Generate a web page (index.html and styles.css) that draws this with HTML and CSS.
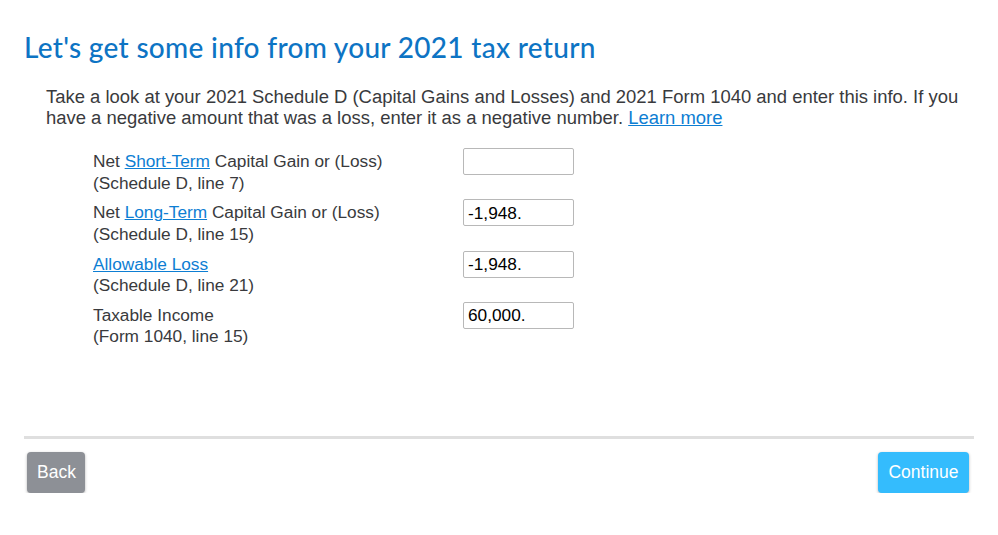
FILE: index.html
```html
<!DOCTYPE html>
<html>
<head>
<meta charset="utf-8">
<link rel="stylesheet" href="styles.css">
</head>
<body>
<div class="page">
  <h1 class="title">Let's get some info from your 2021 tax return</h1>
  <p class="intro">Take a look at your 2021 Schedule D (Capital Gains and Losses) and 2021 Form 1040 and enter this info. If you have a negative amount that was a loss, enter it as a negative number. <a href="#" class="link">Learn more</a></p>
  <div class="form">
    <div class="row">
      <div class="label">Net <a href="#" class="link">Short-Term</a> Capital Gain or (Loss)<br>(Schedule D, line 7)</div>
      <input class="field" type="text" value="">
    </div>
    <div class="row">
      <div class="label">Net <a href="#" class="link">Long-Term</a> Capital Gain or (Loss)<br>(Schedule D, line 15)</div>
      <input class="field" type="text" value="-1,948.">
    </div>
    <div class="row">
      <div class="label"><a href="#" class="link">Allowable Loss</a><br>(Schedule D, line 21)</div>
      <input class="field" type="text" value="-1,948.">
    </div>
    <div class="row">
      <div class="label">Taxable Income<br>(Form 1040, line 15)</div>
      <input class="field" type="text" value="60,000.">
    </div>
  </div>
  <div class="divider"></div>
  <div class="actions">
    <button class="btn btn-back">Back</button>
    <button class="btn btn-continue">Continue</button>
  </div>
</div>
</body>
</html>
```
FILE: styles.css
```css
html, body {
  margin: 0;
  padding: 0;
  background: #fff;
}
.page {
  padding: 29px 24px 0 24px;
  font-family: "Liberation Sans", Arial, sans-serif;
  color: #393a3d;
}
.title {
  margin: 0;
  font-family: "Lato", "Open Sans", sans-serif;
  font-weight: 500;
  font-size: 28px;
  letter-spacing: 0.3px;
  line-height: 36px;
  color: #0d74c4;
}
.intro {
  margin: 22px 10px 0 22px;
  font-size: 18.45px;
  line-height: 20.5px;
}
.link {
  color: #0d7ed3;
  text-decoration: underline;
}
.form {
  margin: 20px 0 0 69px;
  display: flex;
  flex-direction: column;
  gap: 5.3px;
}
.row {
  display: flex;
  align-items: flex-start;
}
.label {
  width: 370px;
  font-size: 17.25px;
  line-height: 21.5px;
  padding-top: 3px;
}
.field {
  box-sizing: border-box;
  width: 111px;
  height: 27px;
  margin: 0;
  border: 1px solid #b8b8b8;
  border-radius: 2px;
  padding: 1px 4px 0 4px;
  font-family: "Liberation Sans", Arial, sans-serif;
  font-size: 17.25px;
  color: #000;
}
.divider {
  margin-top: 88px;
  height: 3px;
  background: #dfdfdf;
}
.actions {
  display: flex;
  justify-content: space-between;
  margin-top: 13px;
  padding: 0 5px 0 3px;
}
.btn {
  height: 41px;
  border: none;
  border-radius: 4px;
  color: #fff;
  font-family: "Liberation Sans", Arial, sans-serif;
  font-size: 17.5px;
  box-shadow: 0 1px 3px rgba(0,0,0,0.3);
  padding: 0 10px;
}
.btn-back {
  width: 58px;
  background: #8d9096;
}
.btn-continue {
  width: 91px;
  background: #34bcfd;
}
```
